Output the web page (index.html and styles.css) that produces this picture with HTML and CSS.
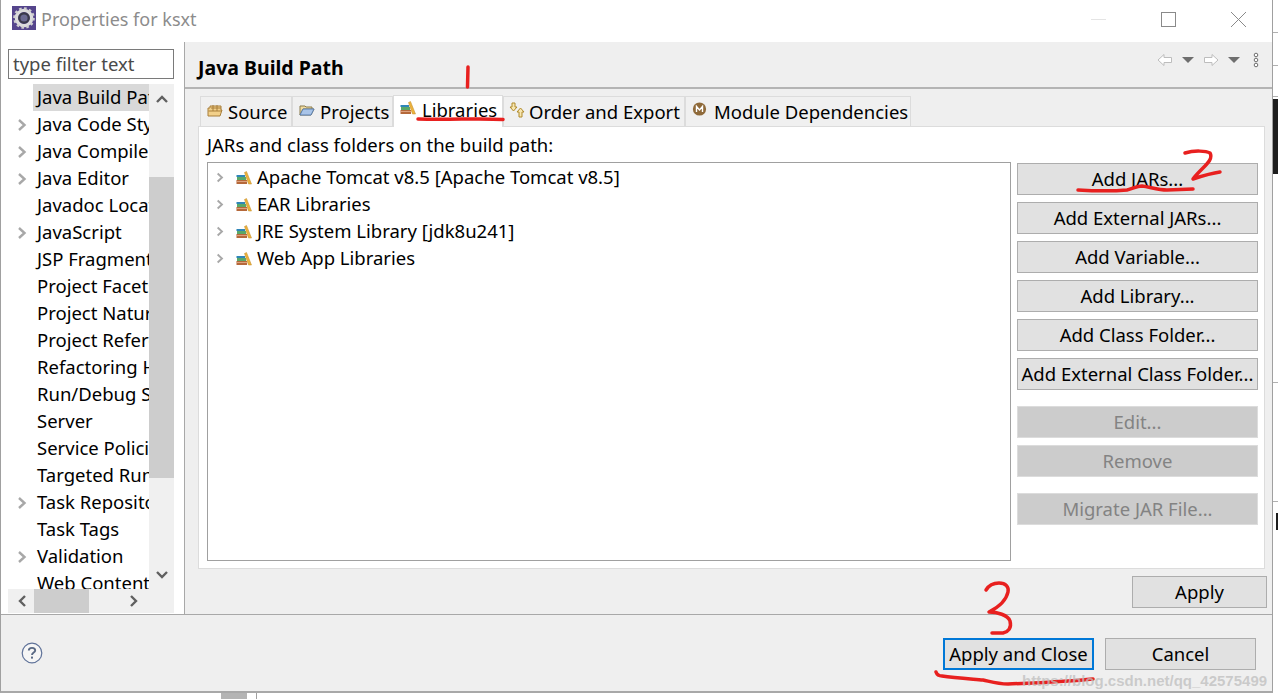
FILE: index.html
```html
<!DOCTYPE html>
<html lang="en">
<head>
<meta charset="utf-8">
<title>Properties for ksxt</title>
<link rel="stylesheet" href="styles.css">
</head>
<body>
<svg class="defs" width="0" height="0" aria-hidden="true">
  <symbol id="lib" viewBox="0 0 16 16">
    <rect x="0.500" y="5" width="8.500" height="2" fill="#2f86b8"/>
    <rect x="1" y="7" width="9" height="3" fill="#5aa868"/>
    <rect x="0.500" y="10" width="10.500" height="4" fill="#b5683a"/>
    <rect x="0.500" y="11" width="10.500" height=".8" fill="#e6b090"/>
    <path d="M8.500 2.500 L10.500 1.500 L15.500 14 L12.500 14 Z" fill="#ecb23c" stroke="#c08a28" stroke-width=".5"/>
  </symbol>
  <symbol id="chev" viewBox="0 0 10 14">
    <path d="M2 2 L7.500 7 L2 12" fill="none" stroke="#a8a8a8" stroke-width="2.400"/>
  </symbol>
</svg>

<div class="window">
  <header class="titlebar">
    <svg class="appicon" width="24" height="24" viewBox="0 0 24 24">
      <rect width="24" height="24" fill="#55458c"/>
      <circle cx="12" cy="12" r="7.600" fill="none" stroke="#dcdcdc" stroke-width="3.400"/>
      <circle cx="12" cy="12" r="9.600" fill="none" stroke="#cfcfcf" stroke-width="2.400" stroke-dasharray="2.600 2.400"/>
      <circle cx="12" cy="12" r="5.800" fill="#3a3a4a"/>
      <circle cx="12" cy="12" r="3.600" fill="#6b6a92"/>
    </svg>
    <span class="title">Properties for ksxt</span>
    <span class="winbtns">
      <svg class="winbtn" width="15" height="16" viewBox="0 0 15 16"><path d="M0 7.500H15" stroke="#e4e4e4"/></svg>
      <svg class="winbtn" width="15" height="16" viewBox="0 0 15 16"><rect x=".5" y=".5" width="14" height="14" fill="none" stroke="#8a8a8a" stroke-width="1"/></svg>
      <svg class="winbtn" width="15" height="16" viewBox="0 0 15 16"><path d="M0 0 L15 15 M15 0 L0 15" stroke="#8a8a8a"/></svg>
    </span>
  </header>

  <div class="main">
    <aside class="sidebar">
      <div class="filter">type filter text</div>
      <div class="treebox">
        <div class="tree">
          <ul class="rows">
            <li class="row selected"><span class="clip">Java Build Path</span></li>
            <li class="row"><svg class="twist"><use href="#chev"/></svg><span class="clip">Java Code Style</span></li>
            <li class="row"><svg class="twist"><use href="#chev"/></svg><span class="clip">Java Compiler</span></li>
            <li class="row"><svg class="twist"><use href="#chev"/></svg><span class="clip">Java Editor</span></li>
            <li class="row"><span class="clip">Javadoc Location</span></li>
            <li class="row"><svg class="twist"><use href="#chev"/></svg><span class="clip">JavaScript</span></li>
            <li class="row"><span class="clip">JSP Fragment</span></li>
            <li class="row"><span class="clip">Project Facets</span></li>
            <li class="row"><span class="clip">Project Natures</span></li>
            <li class="row"><span class="clip">Project References</span></li>
            <li class="row"><span class="clip">Refactoring History</span></li>
            <li class="row"><span class="clip">Run/Debug Settings</span></li>
            <li class="row"><span class="clip">Server</span></li>
            <li class="row"><span class="clip">Service Policies</span></li>
            <li class="row"><span class="clip">Targeted Runtimes</span></li>
            <li class="row"><svg class="twist"><use href="#chev"/></svg><span class="clip">Task Repository</span></li>
            <li class="row"><span class="clip">Task Tags</span></li>
            <li class="row"><svg class="twist"><use href="#chev"/></svg><span class="clip">Validation</span></li>
            <li class="row"><span class="clip">Web Content Settings</span></li>
          </ul>
          <div class="vscroll">
            <svg class="sarrow" width="14" height="10" viewBox="0 0 14 10"><path d="M2 8 L7 3 L12 8" fill="none" stroke="#606060" stroke-width="2.400"/></svg>
            <div class="vthumb"></div>
            <svg class="sarrow" width="14" height="10" viewBox="0 0 14 10"><path d="M2 2 L7 7 L12 2" fill="none" stroke="#606060" stroke-width="2.400"/></svg>
          </div>
        </div>
        <div class="hscroll">
          <svg class="harrow" width="26" height="24" viewBox="0 0 26 24"><path d="M17 7 L12 12 L17 17" fill="none" stroke="#606060" stroke-width="2.400"/></svg>
          <div class="hthumb"></div>
          <svg class="harrow" width="26" height="24" viewBox="0 0 26 24"><path d="M10 7 L15 12 L10 17" fill="none" stroke="#606060" stroke-width="2.400"/></svg>
        </div>
      </div>
    </aside>

    <section class="content">
      <div class="pagehead">
        <h1 class="pagetitle">Java Build Path</h1>
        <div class="navicons">
          <svg width="16" height="14" viewBox="0 0 16 14"><path d="M1 7 L7 1.500 V4.500 H14.500 V9.500 H7 V12.500 Z" fill="#fff" stroke="#bdbdbd"/></svg>
          <svg width="12" height="6" viewBox="0 0 12 6"><path d="M0 0 H12 L6 6 Z" fill="#6e6e6e"/></svg>
          <svg width="16" height="14" viewBox="0 0 16 14"><path d="M15 7 L9 1.500 V4.500 H1.500 V9.500 H9 V12.500 Z" fill="#fff" stroke="#bdbdbd"/></svg>
          <svg width="12" height="6" viewBox="0 0 12 6"><path d="M0 0 H12 L6 6 Z" fill="#6e6e6e"/></svg>
          <svg class="navgap" width="6" height="16" viewBox="0 0 6 16"><g fill="#fff" stroke="#6e6e6e"><circle cx="3" cy="3" r="1.800"/><circle cx="3" cy="8" r="1.800"/><circle cx="3" cy="13" r="1.800"/></g></svg>
        </div>
      </div>

      <div class="tabs">
        <div class="tab t-source">
          <svg width="16" height="16" viewBox="0 0 16 16"><path d="M1 14 V6 H3 V4 H14 V8 L15 8 L13 14 Z" fill="#f2d08a" stroke="#a87f3a"/><path d="M6 3 V9 M10 3 V9 M4 6 H14 M1.500 9 H15" stroke="#a87f3a" fill="none"/></svg>
          <span>Source</span>
        </div>
        <div class="tab t-projects">
          <svg width="16" height="16" viewBox="0 0 16 16"><path d="M1 13 V4 H6 L7 5 H13 V7 H4 L1 13 L12 13 L15 7 H13" fill="#f2dca0" stroke="#8a7a4a"/><path d="M4 7 H15 L12 13 H1 Z" fill="#a9c4e8" stroke="#5a7fb0"/></svg>
          <span>Projects</span>
        </div>
        <div class="tab active t-libs">
          <svg width="16" height="16"><use href="#lib"/></svg>
          <span>Libraries</span>
        </div>
        <div class="tab t-order">
          <svg width="16" height="16" viewBox="0 0 16 16"><path d="M3 1 H6 V5 H8 L4.500 9 L1 5 H3 Z" fill="#f7e6b0" stroke="#b08a2a"/><path d="M11 15 H14 V10 H16 L12.500 6 L9 10 H11 Z" transform="translate(-1 0)" fill="#f7e6b0" stroke="#b08a2a"/></svg>
          <span>Order and Export</span>
        </div>
        <div class="tab t-module">
          <svg width="16" height="16" viewBox="0 0 16 16"><circle cx="7.500" cy="7" r="6.600" fill="#8f6a3a"/><path d="M4.500 10 V4.500 L7.500 8 L10.500 4.500 V10" fill="none" stroke="#fff" stroke-width="1.400"/></svg>
          <span>Module Dependencies</span>
        </div>
      </div>

      <div class="panel">
        <div class="panel-label">JARs and class folders on the build path:</div>
        <div class="panel-body">
          <div class="listbox">
            <div class="entry"><svg class="etw"><use href="#chev"/></svg><svg class="eic"><use href="#lib"/></svg><span>Apache Tomcat v8.5 [Apache Tomcat v8.5]</span></div>
            <div class="entry"><svg class="etw"><use href="#chev"/></svg><svg class="eic"><use href="#lib"/></svg><span>EAR Libraries</span></div>
            <div class="entry"><svg class="etw"><use href="#chev"/></svg><svg class="eic"><use href="#lib"/></svg><span>JRE System Library [jdk8u241]</span></div>
            <div class="entry"><svg class="etw"><use href="#chev"/></svg><svg class="eic"><use href="#lib"/></svg><span>Web App Libraries</span></div>
          </div>
          <div class="btncol">
            <button class="btn">Add JARs...</button>
            <button class="btn">Add External JARs...</button>
            <button class="btn">Add Variable...</button>
            <button class="btn">Add Library...</button>
            <button class="btn">Add Class Folder...</button>
            <button class="btn">Add External Class Folder...</button>
            <button class="btn off first-off">Edit...</button>
            <button class="btn off">Remove</button>
            <button class="btn off last-off">Migrate JAR File...</button>
          </div>
        </div>
      </div>

      <div class="applyrow"><button class="btn apply">Apply</button></div>
    </section>
  </div>

  <footer class="footer">
    <svg class="help" width="22" height="22" viewBox="0 0 22 22"><circle cx="11" cy="11" r="9.800" fill="#f6f6f6" stroke="#5f7299" stroke-width="1.200"/><path d="M7.800 8.400 C7.800 5 14.200 5 14.200 8.400 C14.200 10.600 11 10.400 11 13" fill="none" stroke="#5a6a85" stroke-width="1.900"/><rect x="10" y="14.600" width="2" height="2" fill="#5a6a85"/></svg>
    <div class="footbtns">
      <button class="btn foot default">Apply and Close</button>
      <button class="btn foot">Cancel</button>
    </div>
  </footer>
</div>

<div class="bg-right"><i></i><i></i><i></i><i></i><i></i><b></b><em></em></div>
<div class="bg-bottom"><i></i></div>

<svg class="ink" width="1278" height="699" viewBox="0 0 1278 699" aria-hidden="true">
  <g fill="none" stroke="#e8201f" stroke-width="3.500" stroke-linecap="round" stroke-linejoin="round">
    <path d="M468 67 L467.500 87"/>
    <path d="M418 119 C450 120 480 118 503 119.500"/>
    <path d="M1185 153 C1195 150 1206 151 1210 153 C1213 158 1208 163 1203 168 C1199 172 1195 176 1193 179 C1202 176 1212 173 1220 172"/>
    <path d="M1078 190 C1095 191 1115 191 1127 190 C1133 189 1136 186 1142 186 C1150 187 1158 190 1167 190 L1193 189"/>
    <path d="M986 590 C989 585 994 583 999 583 C1006 583 1009 587 1008 592 C1006 601 997 608 989 612 C997 612 1008 615 1010 621 C1012 628 1008 632 1003 633 L992 633"/>
    <path d="M936 672 C937 675 939 676 942 676 C955 678 972 679 983 680 C992 682 998 684 1008 684 C1030 683 1065 682 1093 679"/>
  </g>
</svg>
<div class="watermark">https://blog.csdn.net/qq_42575499</div>
</body>
</html>
```
FILE: styles.css
```css
* { box-sizing: border-box; }
html, body { margin: 0; padding: 0; }
body {
  width: 1278px;
  height: 699px;
  overflow: hidden;
  position: relative;
  background: #fff;
  font-family: "Noto Sans", "Open Sans", sans-serif;
  font-size: 18.500px;
  color: #000;
}
.defs { position: absolute; }

.window {
  width: 1273px;
  height: 693px;
  display: flex;
  flex-direction: column;
  background: #fff;
  border-left: 1px solid #a0a0a0;
  border-right: 1px solid #a0a0a0;
  border-bottom: 2px solid #a8a8a8;
}

.titlebar {
  height: 42px;
  flex: none;
  display: flex;
  align-items: center;
  padding: 0 11px;
  background: #fff;
}
.appicon { margin-right: 5px; margin-top: -6px; }
.title { color: #8c8c8c; font-size: 18px; margin-top: -4px; }
.winbtns { margin-left: auto; display: flex; gap: 55px; margin-right: 15px; margin-top: -3px; }
.winbtn { display: block; }

.main { flex: 1; min-height: 0; display: flex; }

.sidebar {
  width: 184px;
  flex: none;
  padding: 7px 10px 1px 7px;
  background: #fff;
  border-right: 1px solid #a8a8a8;
  display: flex;
  flex-direction: column;
}
.filter {
  height: 30px;
  flex: none;
  border: 1px solid #7a7a7a;
  padding: 0 4px;
  line-height: 28px;
  color: #4a4a4a;
}
.treebox { flex: 1; min-height: 0; margin-top: 5px; display: flex; flex-direction: column; }
.tree { flex: 1; min-height: 0; display: flex; overflow: hidden; }
.rows { list-style: none; margin: 0; padding: 0; width: 141px; flex: none; overflow: hidden; }
.row { height: 27px; display: flex; align-items: center; padding-left: 29px; position: relative; white-space: nowrap; }
.row.selected::before { content: ""; position: absolute; left: 25px; right: 0; top: 0; bottom: 0; background: #d9d9d9; }
.clip { position: relative; padding-bottom: 3px; }
.twist { position: absolute; left: 9px; top: 7px; width: 10px; height: 14px; }
.vscroll { width: 25px; flex: none; background: #f0f0f0; display: flex; flex-direction: column; align-items: center; }
.sarrow { flex: none; margin: 10px 0 9px; }
.vscroll .sarrow:last-child { margin: 0 0 9px; }
.vthumb { width: 25px; height: 301px; margin-top: 64px; margin-bottom: auto; background: #cdcdcd; }
.hscroll { height: 24px; flex: none; background: #f0f0f0; display: flex; justify-content: space-between; position: relative; }
.harrow { display: block; }
.hthumb { width: 55px; height: 24px; background: #cdcdcd; margin-right: auto; }
.hscroll .harrow:last-child { margin-right: 27px; }

.content { flex: 1; min-width: 0; background: #efefef; display: flex; flex-direction: column; }
.pagehead {
  height: 47px;
  flex: none;
  display: flex;
  align-items: flex-start;
  border-bottom: 2px solid #b4b4b4;
  padding: 12px 13px 0;
}
.pagetitle { margin: 0; font-size: 19.500px; font-weight: 700; line-height: 28px; }
.navicons { margin-left: auto; margin-right: 0; display: flex; align-items: center; gap: 9px; margin-top: -2px; }
.navgap { margin-left: 4px; }

.tabs { display: flex; height: 37px; flex: none; align-items: flex-end; padding-left: 15px; }
.tab {
  height: 30px;
  display: flex;
  align-items: center;
  gap: 5px;
  padding: 0 6px;
  border: 1px solid #dcdcdc;
  border-bottom: 0;
  background: #f0f0f0;
  white-space: nowrap;
}
.tab svg { flex: none; margin-top: -3px; }
.tab.active { background: #fff; height: 32px; position: relative; margin-bottom: -1px; padding-bottom: 5px; gap: 6px; }
.t-source { width: 92px; }
.t-projects { width: 101px; }
.t-libs { width: 110px; }
.t-order { width: 182px; gap: 4px; padding-left: 5px; }
.t-module { width: 226px; gap: 6px; }

.panel {
  height: 443px;
  flex: none;
  margin: 0 7px 0 13px;
  background: #fff;
  border: 1px solid #dcdcdc;
  padding: 0 8px;
  display: flex;
  flex-direction: column;
}
.panel-label { height: 35px; flex: none; line-height: 36px; }
.panel-body { flex: 1; min-height: 0; display: flex; gap: 6px; padding-bottom: 7px; }
.listbox { width: 804px; flex: none; border: 1px solid #a0a0a0; padding-top: 1px; }
.entry { height: 27px; display: flex; align-items: center; white-space: nowrap; }
.entry span { padding-bottom: 3px; }
.etw { width: 8px; height: 11px; margin-left: 8px; flex: none; }
.eic { width: 16px; height: 16px; margin-left: 12px; margin-right: 5px; flex: none; }

.btncol { width: 241px; flex: none; display: flex; flex-direction: column; gap: 7px; padding-top: 1px; }
.btn {
  height: 32px;
  flex: none;
  font: inherit;
  color: #000;
  background: #e1e1e1;
  border: 1px solid #adadad;
  padding: 0 0 2px;
  white-space: nowrap;
}
.btn.off { background: #cccccc; border-color: #dcdcdc; color: #838383; }
.btn.first-off { margin-top: 9px; }
.btn.last-off { margin-top: 9px; }

.applyrow { flex: 1; display: flex; justify-content: flex-end; padding: 7px 5px 0 0; }
.btn.apply { width: 135px; }

.footer {
  height: 77px;
  flex: none;
  background: #efefef;
  border-top: 1px solid #a8a8a8;
  display: flex;
  align-items: center;
  padding: 2px 16px 0 20px;
}
.footbtns { margin-left: auto; display: flex; gap: 11px; }
.btn.foot { width: 151px; }
.btn.default { border: 2px solid #0078d7; }
.help { display: block; margin-top: -2px; }

.bg-right { position: absolute; left: 1273px; top: 0; width: 5px; height: 692px; }
.bg-right i { position: absolute; left: 0; width: 5px; height: 1px; background: #b0b0b0; }
.bg-right i:nth-child(1) { top: 32px; }
.bg-right i:nth-child(2) { top: 65px; }
.bg-right i:nth-child(3) { top: 96px; }
.bg-right i:nth-child(4) { top: 382px; }
.bg-right i:nth-child(5) { top: 501px; }
.bg-right b { position: absolute; left: 0; top: 99px; width: 5px; height: 75px; background: #1e1e1e; }
.bg-right em { position: absolute; left: 3px; top: 513px; width: 2px; height: 17px; background: #1e1e1e; }
.bg-bottom { position: absolute; left: 221px; top: 693px; width: 36px; height: 6px; border-right: 1px solid #a0a0a0; }
.bg-bottom i { display: block; width: 26px; height: 6px; background: #b4b4b4; }

.ink { position: absolute; left: 0; top: 0; pointer-events: none; }
.watermark {
  position: absolute;
  left: 1022px;
  top: 672px;
  font-family: "Liberation Sans", sans-serif;
  font-size: 15px;
  font-weight: 700;
  color: rgba(190, 190, 190, .75);
  white-space: nowrap;
}
```
